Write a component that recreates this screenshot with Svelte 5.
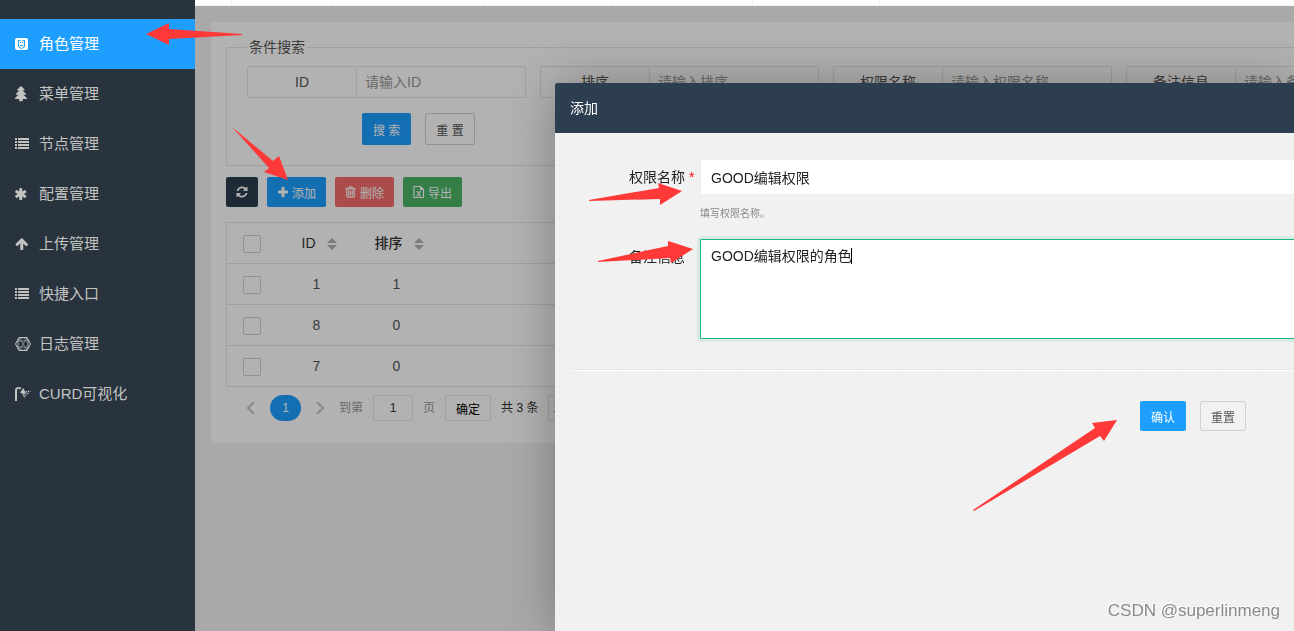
<script>
	const menu = [
		{ icon: 'role', name: '角色管理' },
		{ icon: 'tree', name: '菜单管理' },
		{ icon: 'list', name: '节点管理' },
		{ icon: 'asterisk', name: '配置管理' },
		{ icon: 'up', name: '上传管理' },
		{ icon: 'list', name: '快捷入口' },
		{ icon: 'hex', name: '日志管理' },
		{ icon: 'curd', name: 'CURD可视化' }
	];
	const tabs = [37, 100, 153, 127, 141, 127];
	const fields = ['ID', '排序', '权限名称', '备注信息'];
	const rows = [
		{ id: 1, sort: 1 },
		{ id: 8, sort: 0 },
		{ id: 7, sort: 0 }
	];
	const arrows = [
		'146,34 169,23 169,29 242,34 242,35 169,39 169,45',
		'232,127 273,161 279,156 288,180 264,172 269,168',
		'589,200 659,188 658,183 682,191 660,205 660,199 589,201',
		'598,261 668,246 668,241 693,249 671,263 670,258 598,262',
		'973,510 1095,428 1092,423 1117,420 1104,441 1100,436 974,511'
	];

	let active = $state('角色管理');
	let name = $state('GOOD编辑权限');
	let remark = $state('GOOD编辑权限的角色');
	let page = $state('1');
</script>

{#snippet icon(type)}
	{#if type === 'role'}
		<svg class="icon" viewBox="0 0 14 14">
			<path fill="currentColor" d="M2 1h9a2 2 0 0 1 2 2v8a2 2 0 0 1-2 2H2a2 2 0 0 1-2-2V3a2 2 0 0 1 2-2z" />
			<path d="M3.500 3v6q0 1.500 3 2.500 3-1 3-2.500V3M4 3.500h1.500M7.500 3.500H9M5 5.500h1M7 5.500h1M5 8.500h3" stroke="#1e9fff" fill="none" />
		</svg>
	{:else if type === 'tree'}
		<svg class="icon" viewBox="160 0 1664 1664">
			<path fill="currentColor" d="M1504 1472q0 26-19 45t-45 19h-462q1 17 6 87.500t5 108.500q0 25-18 42.500t-43 17.500h-320q-25 0-43-17.500t-18-42.500q0-38 5-108.500t6-87.500h-462q-26 0-45-19t-19-45 19-45l402-403h-229q-26 0-45-19t-19-45 19-45l402-403h-197q-26 0-45-19t-19-45 19-45l384-384q19-19 45-19t45 19l384 384q19 19 19 45t-19 45-45 19h-197l402 403q19 19 19 45t-19 45-45 19h-229l402 403q19 19 19 45z" transform="translate(96 -100)" />
		</svg>
	{:else if type === 'list'}
		<svg class="icon" viewBox="0 0 14 14">
			<path fill="currentColor" d="M0 1h2v2H0zM3 1h11v2H3zM0 4h2v2H0zM3 4h11v2H3zM0 7h2v2H0zM3 7h11v2H3zM0 10h2v2H0zM3 10h11v2H3z" />
		</svg>
	{:else if type === 'asterisk'}
		<svg class="icon" viewBox="160 0 1792 1792">
			<path fill="currentColor" d="M1546 1050q46 26 59.500 77.500t-12.500 97.500l-64 110q-26 46-77.500 59.500t-97.500-12.500l-266-153v307q0 52-38 90t-90 38h-128q-52 0-90-38t-38-90v-307l-266 153q-46 26-97.500 12.500t-77.500-59.500l-64-110q-26-46-12.500-97.500t59.500-77.500l266-154-266-154q-46-26-59.500-77.500t12.500-97.500l64-110q26-46 77.500-59.500t97.500 12.500l266 153v-307q0-52 38-90t90-38h128q52 0 90 38t38 90v307l266-153q46-26 97.500-12.500t77.500 59.500l64 110q26 46 12.500 97.500t-59.500 77.500l-266 154z" />
		</svg>
	{:else if type === 'up'}
		<svg class="icon" viewBox="53 30 1750 1750">
			<path fill="currentColor" d="M1675 971q0 51-37 90l-75 75q-38 38-91 38-54 0-90-38l-294-293v704q0 52-37.500 84.500t-90.500 32.500h-128q-53 0-90.500-32.500t-37.500-84.500v-704l-294 293q-36 38-90 38t-90-38l-75-75q-38-38-38-90 0-53 38-91l651-651q35-37 90-37 54 0 91 37l651 651q37 39 37 91z" />
		</svg>
	{:else if type === 'hex'}
		<svg class="icon" viewBox="0 0 14 14">
			<path d="M4 0.500h8l3.500 6.500-3.500 6.500H4L0.500 7z" fill="none" stroke="currentColor" />
			<path d="M4 .5l8 13M12 .5l-8 13M2.500 4h11M2.500 10h11M4 .5L2.500 10 8 13.500 13.500 10 12 .5M2.500 4L8 .5 13.500 4 12 13.500M4 13.500L2.500 4" fill="none" stroke="currentColor" stroke-width=".5" />
		</svg>
	{:else if type === 'curd'}
		<svg class="icon" viewBox="0 0 14 14">
			<path fill="currentColor" d="M0 14V3.500Q0 0 3.500 0q2 0 3 1.200L5.300 2.600Q4.600 1.800 3.500 1.800 2 1.800 2 3.500V14z" />
			<path fill="currentColor" d="M5 5.500L8.500 1l2 5-2.500 1z" />
			<path d="M9 4.800l6.500-.5M8.500 6l5 .5M8.500 7l3.500 2M8 7.500l2 3.500" stroke="currentColor" stroke-width="1.300" stroke-dasharray="1.200 .7" fill="none" />
		</svg>
	{:else if type === 'refresh'}
		<svg class="small" viewBox="64 64 1664 1664">
			<path fill="currentColor" d="M1639 1056q0 5-1 7-64 268-268 434.500t-478 166.500q-146 0-282.500-55t-243.500-157l-129 129q-19 19-45 19t-45-19-19-45v-448q0-26 19-45t45-19h448q26 0 45 19t19 45-19 45l-137 137q71 66 161 102t187 36q134 0 250-65t186-179q11-17 53-117 8-23 30-23h192q13 0 22.500 9.500t9.500 22.500zm25-800v448q0 26-19 45t-45 19h-448q-26 0-45-19t-19-45 19-45l138-138q-148-137-349-137-134 0-250 65t-186 179q-11 17-53 117-8 23-30 23h-199q-13 0-22.500-9.500t-9.500-22.500v-7q65-268 270-434.500t480-166.500q146 0 284 55.500t245 156.500l130-129q19-19 45-19t45 19 19 45z" />
		</svg>
	{:else if type === 'plus'}
		<svg class="small" viewBox="0 0 12 12">
			<path fill="currentColor" d="M4.500 1h3v3.500H11v3H7.500V11h-3V7.500H1v-3h3.500z" />
		</svg>
	{:else if type === 'trash'}
		<svg class="small" viewBox="128 64 1664 1664">
			<path fill="currentColor" stroke="currentColor" stroke-width="40" d="M704 736v576q0 14-9 23t-23 9h-64q-14 0-23-9t-9-23v-576q0-14 9-23t23-9h64q14 0 23 9t9 23zm256 0v576q0 14-9 23t-23 9h-64q-14 0-23-9t-9-23v-576q0-14 9-23t23-9h64q14 0 23 9t9 23zm256 0v576q0 14-9 23t-23 9h-64q-14 0-23-9t-9-23v-576q0-14 9-23t23-9h64q14 0 23 9t9 23zm128 724v-948h-896v948q0 22 7 40.500t14.500 27 10.500 8.500h832q3 0 10.500-8.500t14.500-27 7-40.500zm-672-1076h448l-48-117q-7-9-17-11h-317q-10 2-17 11zm928 32v64q0 14-9 23t-23 9h-96v948q0 83-47 143.500t-113 60.500h-832q-66 0-113-58.500t-47-141.500v-952h-96q-14 0-23-9t-9-23v-64q0-14 9-23t23-9h309l70-167q15-37 54-63t79-26h320q40 0 79 26t54 63l70 167h309q14 0 23 9t9 23z" />
		</svg>
	{:else if type === 'excel'}
		<svg class="small" viewBox="0 0 12 12">
			<path d="M1 .5h6.500L10.500 3.500v8H1zM7.500 .5v3h3M4 5.500l3.500 4.500M7.500 5.500L4 10M3.500 5.500H5M6.500 5.500H8M3.500 10H5M6.500 10H8" fill="none" stroke="currentColor" stroke-width="1.200" />
		</svg>
	{/if}
{/snippet}

{#snippet sorter()}
	<svg class="sorter" viewBox="0 0 10 12">
		<path d="M0 5l5-5 5 5zM0 7h10l-5 5z" fill="#b2b2b2" />
	</svg>
{/snippet}

<div class="layout">
	<aside>
		<nav>
			{#each menu as item}
				<a href="#{item.name}" class:active={active === item.name} onclick={() => (active = item.name)}>
					{@render icon(item.icon)}
					<span>{item.name}</span>
				</a>
			{/each}
		</nav>
	</aside>

	<main>
		<div class="tabs">
			{#each tabs as width}
				<span style="width: {width}px"></span>
			{/each}
		</div>
		<div class="content">
			<div class="card">
				<fieldset>
					<legend>条件搜索</legend>
					<div class="fields">
						{#each fields as field, i}
							<div class="field">
								<label for="field{i}">{field}</label>
								<input id="field{i}" type="text" placeholder="请输入{field}" />
							</div>
						{/each}
					</div>
					<div class="actions">
						<button class="btn blue">搜 索</button>
						<button class="btn plain">重 置</button>
					</div>
				</fieldset>

				<div class="toolbar">
					<button class="btn dark" aria-label="刷新">{@render icon('refresh')}</button>
					<button class="btn blue">{@render icon('plus')}添加</button>
					<button class="btn red">{@render icon('trash')}删除</button>
					<button class="btn green">{@render icon('excel')}导出</button>
				</div>

				<table>
					<thead>
						<tr>
							<th class="check"><input type="checkbox" aria-label="全选" /></th>
							<th class="num">ID{@render sorter()}</th>
							<th class="num">排序{@render sorter()}</th>
							<th></th>
						</tr>
					</thead>
					<tbody>
						{#each rows as row}
							<tr>
								<td class="check"><input type="checkbox" aria-label="选择 {row.id}" /></td>
								<td>{row.id}</td>
								<td>{row.sort}</td>
								<td></td>
							</tr>
						{/each}
					</tbody>
				</table>

				<div class="pager">
					<button class="step" aria-label="上一页">
						<svg viewBox="0 0 8 12"><path d="M7 0L1 6l6 6" /></svg>
					</button>
					<button class="current">1</button>
					<button class="step" aria-label="下一页">
						<svg viewBox="0 0 8 12"><path d="M1 0l6 6-6 6" /></svg>
					</button>
					<label for="page">到第</label>
					<input id="page" type="text" bind:value={page} />
					<span class="unit">页</span>
					<button class="go">确定</button>
					<span class="total">共 3 条</span>
					<select aria-label="每页条数">
						<option>10 条/页</option>
					</select>
				</div>
			</div>
			<div class="shade"></div>
		</div>
	</main>
</div>

<div class="modal" role="dialog" aria-labelledby="title">
	<header id="title">添加</header>
	<form>
		<div class="row">
			<label for="name">权限名称 <i>*</i></label>
			<div class="control">
				<input id="name" type="text" bind:value={name} />
				<p>填写权限名称。</p>
			</div>
		</div>
		<div class="row">
			<label for="remark">备注信息</label>
			<div class="control">
				<textarea id="remark" bind:value={remark}></textarea>
				<span class="caret"></span>
			</div>
		</div>
		<hr />
		<div class="submit">
			<button type="button" class="btn blue">确认</button>
			<button type="button" class="btn plain">重置</button>
		</div>
	</form>
</div>

<svg class="arrows">
	{#each arrows as points}
		<polygon {points} />
	{/each}
</svg>

<div class="watermark">CSDN @superlinmeng</div>

<style>
	:global(body) {
		overflow: hidden;
		font-family: 'Liberation Sans', 'Noto Sans CJK SC', sans-serif;
		font-size: 14px;
		line-height: 24px;
		color: #555;
	}
	:global(*) {
		box-sizing: border-box;
	}
	button,
	input,
	textarea,
	select {
		font-family: inherit;
		margin: 0;
	}
	.layout {
		display: flex;
		min-height: 100vh;
	}

	aside {
		flex: 0 0 195px;
		padding-top: 19px;
		background: #28333e;
	}
	nav a {
		display: flex;
		align-items: center;
		gap: 10px;
		height: 50px;
		padding-left: 15px;
		font-size: 15px;
		color: #c3c3c1;
		text-decoration: none;
	}
	nav a.active {
		background: #1e9fff;
		color: #fff;
	}
	.icon {
		width: 14px;
		height: 14px;
		overflow: visible;
	}
	.small {
		width: 12px;
		height: 12px;
	}

	main {
		flex: 1;
		min-width: 0;
		display: flex;
		flex-direction: column;
	}
	.tabs {
		display: flex;
		height: 6px;
		background: #fff;
		border-bottom: 1px solid #f2f2f2;
	}
	.tabs span {
		border-right: 1px solid #f2f2f2;
	}
	.content {
		position: relative;
		flex: 1;
		padding: 16px 0 0 16px;
		background: #f2f2f2;
		overflow: hidden;
	}
	.shade {
		position: absolute;
		inset: 0;
		background: rgba(0, 0, 0, 0.3);
	}
	.card {
		padding: 15px 0 22px 15px;
		background: #fff;
		border-radius: 4px 0 0 4px;
	}

	fieldset {
		min-width: 0;
		margin: 0;
		padding: 9px 0 20px 20px;
		border: 1px solid #e6e6e6;
		border-right: 0;
	}
	legend {
		padding: 0 2px;
		line-height: 20px;
	}
	.fields {
		display: flex;
		gap: 14px;
	}
	.field {
		flex: 0 0 279px;
		min-width: 0;
		display: flex;
		height: 32px;
		border: 1px solid #e6e6e6;
		border-radius: 2px;
	}
	.field label {
		flex: 0 0 109px;
		line-height: 30px;
		text-align: center;
		border-right: 1px solid #e6e6e6;
	}
	.field input {
		flex: 1;
		width: 0;
		padding: 0 8px;
		border: 0;
		background: none;
		font-size: 14px;
	}
	.field input::placeholder {
		color: #999;
	}
	.actions {
		display: flex;
		gap: 14px;
		padding: 15px 0 0 115px;
	}

	.btn {
		display: flex;
		align-items: center;
		justify-content: center;
		gap: 3px;
		height: 30px;
		padding: 0 10px;
		border: 1px solid transparent;
		border-radius: 2px;
		font-size: 12px;
		color: #fff;
		white-space: nowrap;
	}
	.actions .btn {
		height: 32px;
	}
	.blue {
		background: #1e9fff;
	}
	.plain {
		background: none;
		border-color: #d2d2d2;
		color: #555;
	}
	.dark {
		background: #2c3e50;
	}
	.red {
		background: #f56c6c;
	}
	.green {
		background: #4cb568;
	}
	.toolbar {
		display: flex;
		gap: 9px;
		margin: 11px 0 15px;
	}
	.toolbar .btn {
		padding: 0 9px;
	}

	table {
		width: 100%;
		table-layout: fixed;
		border-collapse: collapse;
		border: 1px solid #e6e6e6;
		border-right: 0;
	}
	th,
	td {
		height: 41px;
		padding: 0;
		border-bottom: 1px solid #e6e6e6;
		text-align: center;
	}
	.check {
		width: 50px;
	}
	.num {
		width: 80px;
		padding-left: 5px;
	}
	th {
		font-weight: 500;
		color: #333;
	}
	input[type='checkbox'] {
		display: block;
		width: 18px;
		height: 18px;
		margin: 2px auto 0;
		appearance: none;
		border: 1px solid #d2d2d2;
		border-radius: 2px;
	}
	.sorter {
		width: 10px;
		height: 12px;
		margin-left: 11px;
		vertical-align: -2px;
	}

	.pager {
		display: flex;
		align-items: center;
		height: 26px;
		margin-top: 8px;
		padding-left: 21px;
		font-size: 12px;
		color: #999;
	}
	.step {
		display: flex;
		padding: 0;
		border: 0;
		background: none;
	}
	.step svg {
		width: 8px;
		height: 12px;
	}
	.step path {
		fill: none;
		stroke: #c2c2c2;
		stroke-width: 2;
	}
	.current {
		width: 31px;
		height: 26px;
		margin: 0 15px;
		padding: 0;
		border: 0;
		border-radius: 13px;
		background: #1e9fff;
		color: #fff;
		font-size: 12px;
	}
	.pager label {
		margin: 0 10px 0 15px;
	}
	#page {
		width: 40px;
		height: 26px;
		padding: 0;
		border: 1px solid #e6e6e6;
		border-radius: 2px;
		text-align: center;
		font-size: 12px;
		color: #333;
	}
	.unit {
		margin: 0 10px;
	}
	.go {
		height: 26px;
		padding: 0 10px;
		border: 1px solid #e6e6e6;
		border-radius: 2px;
		background: #fff;
		font-size: 12px;
		color: #000;
	}
	.total {
		margin: 0 10px;
		color: #333;
	}
	.pager select {
		height: 26px;
		border: 1px solid #e6e6e6;
		border-radius: 2px;
		background: #fff;
		font-size: 12px;
	}

	.modal {
		position: fixed;
		inset: 83px 0 0 555px;
		background: #f1f1f1;
		border-radius: 2px 0 0 0;
		box-shadow: 1px 1px 50px rgba(0, 0, 0, 0.3);
		color: #222;
	}
	header {
		height: 50px;
		padding-left: 15px;
		line-height: 50px;
		background: #2d3e50;
		border-radius: 2px 0 0 0;
		color: #fff;
	}
	form {
		padding: 26px 0 0 16px;
	}
	.row {
		display: flex;
		margin-bottom: 14px;
	}
	.row label {
		flex: 0 0 129px;
		padding: 6px 0 0 58px;
	}
	.row i {
		font-style: normal;
		color: #f00;
	}
	.control {
		position: relative;
		flex: 1;
	}
	.control input,
	.control textarea {
		display: block;
		width: 100%;
		height: 36px;
		padding: 0 10px;
		border: 1px solid #eee;
		border-right: 0;
		border-radius: 2px 0 0 2px;
		background: #fff;
		font-size: 14px;
		color: #222;
	}
	.control textarea {
		height: 100px;
		padding-top: 6px;
		border-color: #16b777;
		outline: 0;
		box-shadow: 0 0 0 3px rgba(22, 183, 119, 0.1);
		line-height: 20px;
		resize: none;
	}
	.caret {
		position: absolute;
		top: 9px;
		left: 151px;
		width: 1px;
		height: 16px;
		background: #000;
	}
	.control p {
		margin: 8px 0 0;
		font-size: 10px;
		line-height: 22px;
		color: #888;
	}
	hr {
		margin: 30px 0;
		border: 0;
		border-top: 1px dashed #e2e2e2;
		border-bottom: 1px solid #fff;
	}
	.submit {
		display: flex;
		justify-content: flex-end;
		gap: 14px;
		padding-right: 48px;
	}

	.arrows {
		position: fixed;
		inset: 0;
		width: 100%;
		height: 100%;
		fill: #ff3838;
		pointer-events: none;
	}
	.watermark {
		position: fixed;
		right: 14px;
		bottom: 8px;
		font-size: 17px;
		color: #8a8a8a;
		text-shadow: -1px -1px 0 #fff;
	}
</style>
